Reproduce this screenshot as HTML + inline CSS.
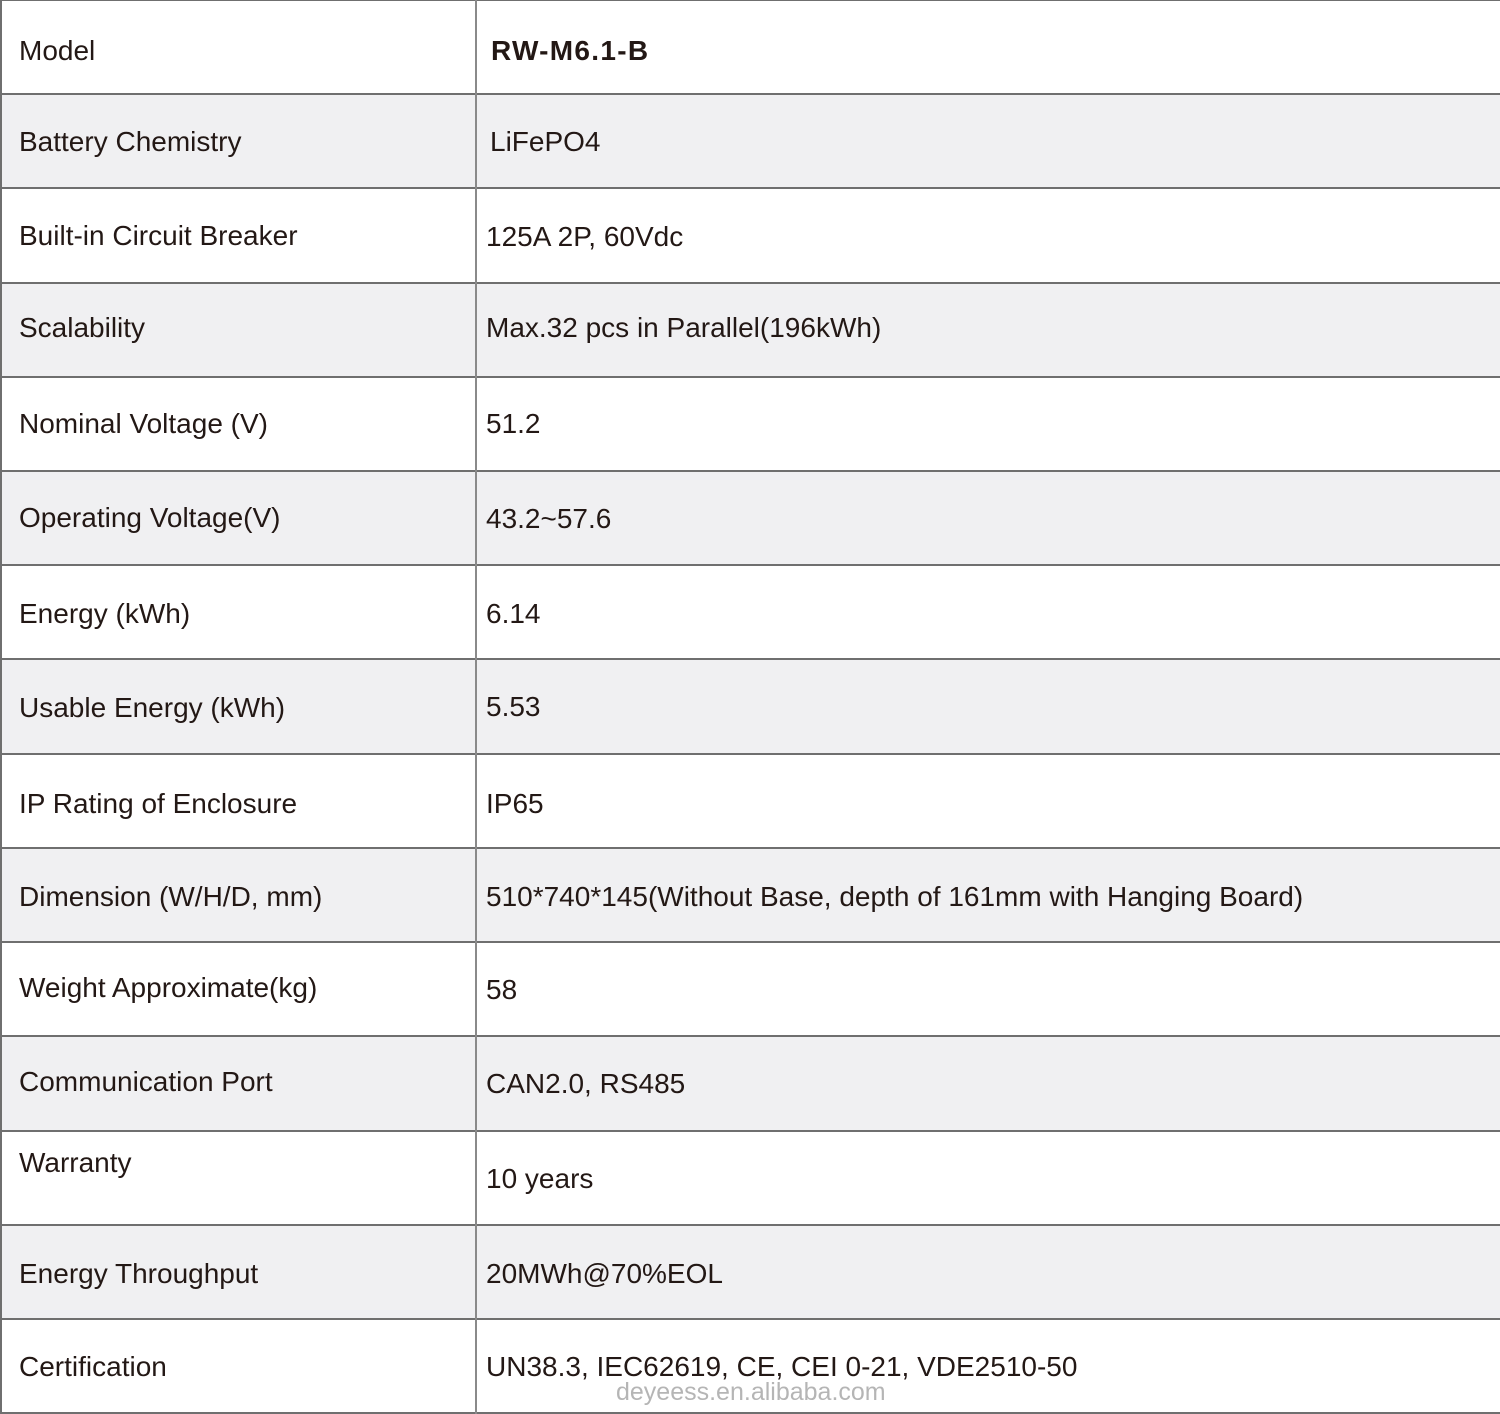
<!DOCTYPE html>
<html><head><meta charset="utf-8">
<style>
html,body{margin:0;padding:0;background:#fff;}
body{width:1500px;height:1414px;position:relative;overflow:hidden;font-family:"Liberation Sans",Arial,sans-serif;color:#231815;}
.r{position:absolute;left:0;width:1500px;}
.g{background:#f0f0f2;}
.h{position:absolute;left:0;width:1500px;height:2px;background:#6f6f6f;}
.t{position:absolute;font-size:28px;line-height:30px;white-space:nowrap;letter-spacing:0;}
.l{left:19px;}
.v{left:486px;}
</style></head><body>
<div class="r g" style="top:94px;height:94px"></div>
<div class="r g" style="top:283px;height:94px"></div>
<div class="r g" style="top:471px;height:94px"></div>
<div class="r g" style="top:659px;height:95px"></div>
<div class="r g" style="top:848px;height:94px"></div>
<div class="r g" style="top:1036px;height:95px"></div>
<div class="r g" style="top:1225px;height:94px"></div>

<div class="h" style="top:0;height:1px"></div>
<div class="h" style="top:93px"></div>
<div class="h" style="top:187px"></div>
<div class="h" style="top:282px"></div>
<div class="h" style="top:376px"></div>
<div class="h" style="top:470px"></div>
<div class="h" style="top:564px"></div>
<div class="h" style="top:658px"></div>
<div class="h" style="top:753px"></div>
<div class="h" style="top:847px"></div>
<div class="h" style="top:941px"></div>
<div class="h" style="top:1035px"></div>
<div class="h" style="top:1130px"></div>
<div class="h" style="top:1224px"></div>
<div class="h" style="top:1318px"></div>
<div class="h" style="top:1412px"></div>
<div style="position:absolute;left:0;top:0;width:2px;height:1414px;background:#6f6f6f"></div>
<div style="position:absolute;left:475px;top:0;width:2px;height:1414px;background:#8a8a8a"></div>

<div class="t l" style="top:36px">Model</div>
<div class="t v" style="top:36px;left:491px;font-weight:bold;letter-spacing:1.3px">RW-M6.1-B</div>
<div class="t l" style="top:127px">Battery Chemistry</div>
<div class="t v" style="top:127px;left:490px">LiFePO4</div>
<div class="t l" style="top:221px">Built-in Circuit Breaker</div>
<div class="t v" style="top:222px">125A 2P, 60Vdc</div>
<div class="t l" style="top:313px">Scalability</div>
<div class="t v" style="top:313px">Max.32 pcs in Parallel(196kWh)</div>
<div class="t l" style="top:409px">Nominal Voltage (V)</div>
<div class="t v" style="top:409px">51.2</div>
<div class="t l" style="top:503px">Operating Voltage(V)</div>
<div class="t v" style="top:504px">43.2~57.6</div>
<div class="t l" style="top:599px">Energy (kWh)</div>
<div class="t v" style="top:599px">6.14</div>
<div class="t l" style="top:693px">Usable Energy (kWh)</div>
<div class="t v" style="top:692px">5.53</div>
<div class="t l" style="top:789px">IP Rating of Enclosure</div>
<div class="t v" style="top:789px">IP65</div>
<div class="t l" style="top:882px">Dimension (W/H/D, mm)</div>
<div class="t v" style="top:882px">510*740*145(Without Base, depth of 161mm with Hanging Board)</div>
<div class="t l" style="top:973px">Weight Approximate(kg)</div>
<div class="t v" style="top:975px">58</div>
<div class="t l" style="top:1067px">Communication Port</div>
<div class="t v" style="top:1069px">CAN2.0, RS485</div>
<div class="t l" style="top:1148px">Warranty</div>
<div class="t v" style="top:1164px">10 years</div>
<div class="t l" style="top:1259px">Energy Throughput</div>
<div class="t v" style="top:1259px">20MWh@70%EOL</div>
<div class="t l" style="top:1352px">Certification</div>
<div class="t v" style="top:1352px">UN38.3, IEC62619, CE, CEI 0-21, VDE2510-50</div>
<div class="t" style="left:616px;top:1377px;font-size:25px;color:#b5b5b5">deyeess.en.alibaba.com</div>
</body></html>
